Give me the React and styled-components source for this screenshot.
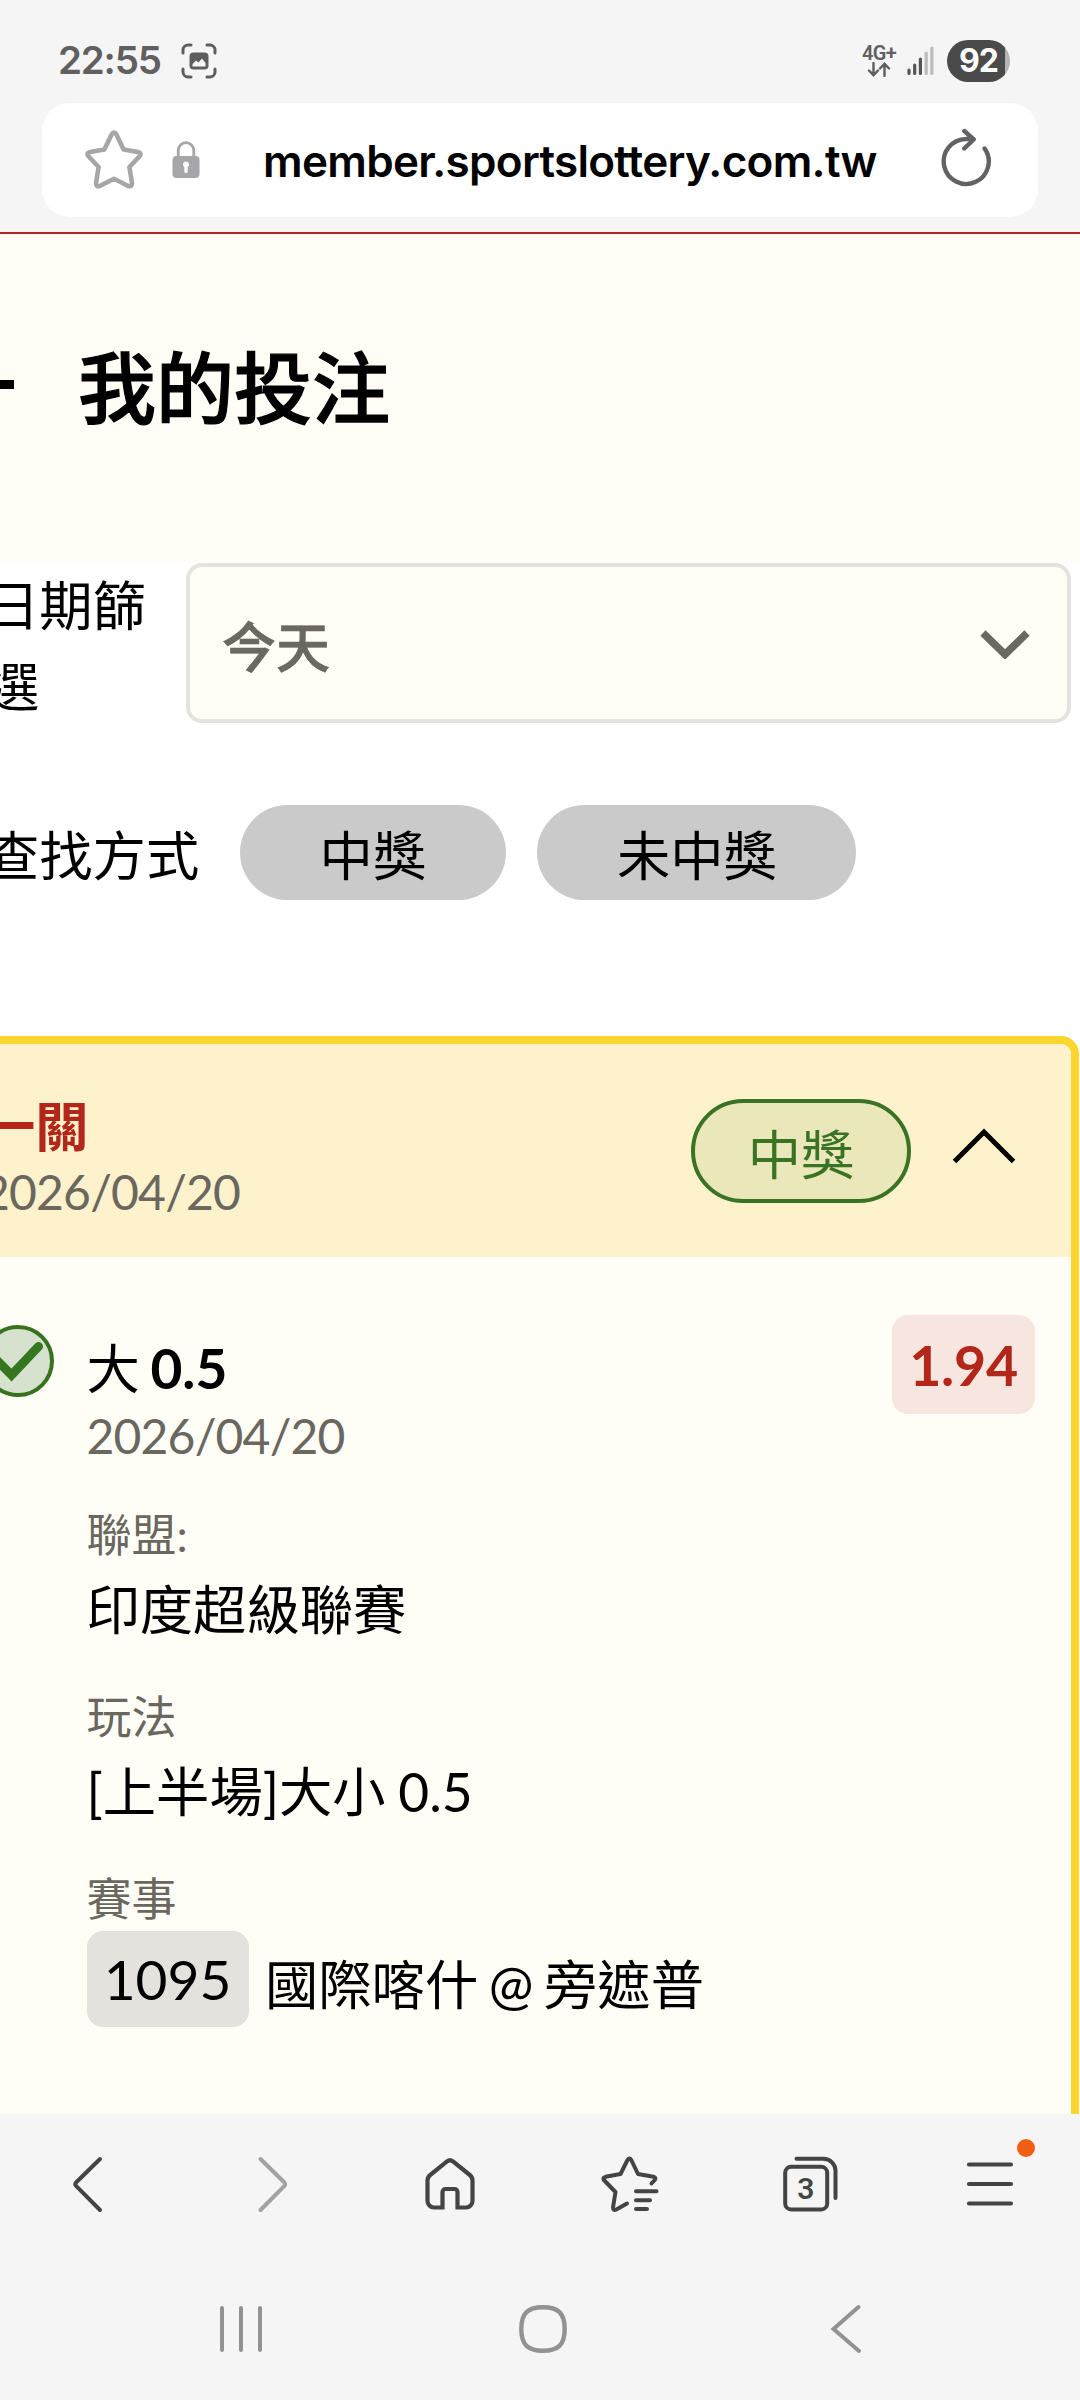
import React, { useState } from "react";
import styled, { createGlobalStyle } from "styled-components";

const GlobalStyle = createGlobalStyle`
  * {
    box-sizing: border-box;
  }
  body {
    margin: 0;
    background: #f5f5f5;
  }
  button {
    border: none;
    padding: 0;
    font-family: inherit;
    color: inherit;
  }
  svg {
    display: block;
    flex: none;
  }
`;

const chrome = "#444444";

const details = [
  { label: "聯盟:", value: "印度超級聯賽" },
  { label: "玩法", value: "[上半場]大小 0.5" },
];

const CaptureIcon = () => (
  <svg width="36" height="36" viewBox="0 0 36 36" fill="none">
    <path
      d="M2 10V7a5 5 0 0 1 5-5h3M26 2h3a5 5 0 0 1 5 5v3M34 26v3a5 5 0 0 1-5 5h-3M10 34H7a5 5 0 0 1-5-5v-3"
      stroke="#5e5e5e"
      strokeWidth="3"
      strokeLinecap="round"
    />
    <rect x="8.500" y="9.500" width="19" height="17" rx="4" fill="#5e5e5e" />
    <path
      d="M11.500 23.500v-2.500l3.500-3.500 2.500 2 3.500-4 3.500 4.500v3.500z"
      fill="#f5f5f5"
    />
  </svg>
);

const DataArrows = () => (
  <svg width="24" height="15" viewBox="0 0 24 15" fill="none">
    <path
      d="M6.500 1v12M2 8.500l4.500 4.700L11 8.500M17.500 14V2M13 6.500l4.500-4.700L22 6.500"
      stroke="#5e5e5e"
      strokeWidth="2.400"
      strokeLinecap="round"
    />
  </svg>
);

const SignalIcon = () => (
  <svg width="28" height="30" viewBox="0 0 28 30">
    <g stroke="#555" strokeWidth="3.200" strokeLinecap="round">
      <path d="M2 24v3.500M7.700 19v8.500M13.400 13v14.500" />
    </g>
    <g stroke="#bcbcbc" strokeWidth="3.200" strokeLinecap="round">
      <path d="M19.200 7v20.500M24.900 2v25.500" />
    </g>
  </svg>
);

const StarIcon = () => (
  <svg width="58" height="60" viewBox="0 0 58 60" fill="none">
    <path
      d="M26.600 4.500Q29 .8 31.400 4.500L38.600 19.500 53 22Q57.300 23.200 54.300 26.500L44.400 37 47 53Q47 57.300 43.200 56L29 48.800 14.800 56Q11 57.300 11 53L13.600 37 3.700 26.500Q.7 23.200 5 22L19.400 19.500Z"
      stroke="#a6a6a8"
      strokeWidth="4.600"
      strokeLinejoin="round"
    />
  </svg>
);

const LockIcon = () => (
  <svg width="28" height="38" viewBox="0 0 28 38">
    <path
      d="M6.200 17V9.500a7.800 7.800 0 0 1 15.600 0V17"
      fill="none"
      stroke="#a6a6a8"
      strokeWidth="2.800"
    />
    <rect x=".5" y="15" width="27" height="22" rx="4" fill="#a6a6a8" />
    <path
      d="M14 20.500a3 3 0 0 1 1.700 5.500v4.500a1.700 1.700 0 0 1-3.400 0V26a3 3 0 0 1 1.700-5.500z"
      fill="#fff"
    />
  </svg>
);

const ReloadIcon = () => (
  <svg width="54" height="60" viewBox="0 0 54 60" fill="none">
    <g
      stroke="#626264"
      strokeWidth="4.400"
      strokeLinecap="round"
      strokeLinejoin="round"
    >
      <path d="M45.600 20.500A22.500 22.500 0 1 1 27 11H34" />
      <path d="M25.300 3l9.400 8.500-9.400 9" />
    </g>
  </svg>
);

const SelectArrow = () => (
  <svg width="52" height="30" viewBox="0 0 52 30" fill="none">
    <path d="M4 4l22 21.500L48 4" stroke="#6a6861" strokeWidth="7.500" />
  </svg>
);

const CollapseArrow = () => (
  <svg width="64" height="38" viewBox="0 0 64 38" fill="none">
    <path d="M2.500 34.500L32 5l29.500 29.500" stroke="#000" strokeWidth="5" />
  </svg>
);

const CheckIcon = () => (
  <svg width="72" height="72" viewBox="0 0 72 72" fill="none">
    <circle
      cx="36"
      cy="36"
      r="34"
      fill="#d6e1ce"
      stroke="#37721f"
      strokeWidth="4"
    />
    <path
      d="M15.500 36L29.500 50 56.500 21.500"
      stroke="#35771f"
      strokeWidth="9"
      strokeLinecap="round"
    />
  </svg>
);

const BackIcon = ({ color = chrome }) => (
  <svg width="60" height="60" viewBox="0 0 60 60" fill="none">
    <path
      d="M40 5L16.300 28.200Q14.300 30.200 16.300 32.200L40 56"
      stroke={color}
      strokeWidth="4"
      strokeLinecap="round"
    />
  </svg>
);

const ForwardIcon = () => (
  <svg width="60" height="60" viewBox="0 0 60 60" fill="none">
    <path
      d="M20.500 5L44.200 28.200Q46.200 30.200 44.200 32.200L20.500 56"
      stroke="#a2a2a2"
      strokeWidth="4"
      strokeLinecap="round"
    />
  </svg>
);

const HomeIcon = () => (
  <svg width="60" height="60" viewBox="0 0 60 60" fill="none">
    <path
      d="M22.500 53.500H14a6.500 6.500 0 0 1-6.500-6.500V26.500a7 7 0 0 1 2.700-5.500L27 7.400a5 5 0 0 1 6 0L49.800 21a7 7 0 0 1 2.700 5.500V47a6.500 6.500 0 0 1-6.500 6.500H37.500V38a3 3 0 0 0-3-3h-9a3 3 0 0 0-3 3z"
      stroke={chrome}
      strokeWidth="4.200"
    />
  </svg>
);

const BookmarksIcon = () => (
  <svg width="60" height="60" viewBox="0 0 60 60" fill="none">
    <g
      stroke={chrome}
      strokeWidth="4"
      strokeLinecap="round"
      strokeLinejoin="round"
    >
      <path d="M51.500 29.500L54.800 26Q56.500 23.500 53.500 22.800L38 20 31.300 6Q29.400 3.200 27.500 6L20.500 20 5.500 22.800Q2 23.800 4.300 26.500L15.500 38 13 53.500Q13 57 16.300 55.500L27 49.500" />
      <path d="M36 37.300h20.500M36 46.300h14M36 55h11" />
    </g>
  </svg>
);

const TabsIcon = () => (
  <svg width="60" height="60" viewBox="0 0 60 60" fill="none">
    <g stroke={chrome} strokeWidth="4" strokeLinecap="round">
      <rect x="5.200" y="12.800" width="42" height="42.600" rx="6" />
      <path d="M16.500 4.800H43.500A12 12 0 0 1 55.500 16.800V44" />
    </g>
    <text
      x="25.800"
      y="44.500"
      textAnchor="middle"
      fill={chrome}
      fontFamily="Roboto, sans-serif"
      fontWeight="600"
      fontSize="30"
    >
      3
    </text>
  </svg>
);

const MenuIcon = () => (
  <svg width="60" height="60" viewBox="0 0 60 60" fill="none">
    <path
      d="M9 10.500h42M9 30h42M9 49.500h42"
      stroke={chrome}
      strokeWidth="4.200"
      strokeLinecap="round"
    />
  </svg>
);

const RecentsIcon = () => (
  <svg width="50" height="50" viewBox="0 0 50 50" fill="none">
    <path
      d="M6 4v42M25 4v42M44 4v42"
      stroke="#929292"
      strokeWidth="4"
      strokeLinecap="round"
    />
  </svg>
);

const NavHomeIcon = () => (
  <svg width="50" height="50" viewBox="0 0 50 50" fill="none">
    <path
      d="M25 3.300C40 3.300 46.700 9 46.700 25S40 46.700 25 46.700 3.300 41 3.300 25 10 3.300 25 3.300z"
      stroke="#929292"
      strokeWidth="4.400"
    />
  </svg>
);

const NavBackIcon = () => (
  <svg width="50" height="50" viewBox="0 0 50 50" fill="none">
    <path
      d="M38.500 3L13.500 25l25.500 22"
      stroke="#929292"
      strokeWidth="4"
      strokeLinecap="round"
    />
  </svg>
);

const App = () => {
  const [open, setOpen] = useState(true);

  return (
    <>
      <GlobalStyle />
      <Screen>
        <StatusBar>
          <Clock>22:55</Clock>
          <CaptureIcon />
          <StatusRight>
            <Network>
              <span>4G+</span>
              <DataArrows />
            </Network>
            <SignalIcon />
            <Battery>92</Battery>
          </StatusRight>
        </StatusBar>
        <AddressBar>
          <StarIcon />
          <LockIcon />
          <Url>member.sportslottery.com.tw</Url>
          <ReloadIcon />
        </AddressBar>
        <Page>
          <PageHead>
            <BackDash />
            <Title>我的投注</Title>
          </PageHead>
          <DateRow>
            <DateLabel>日期篩選</DateLabel>
            <Select>
              今天
              <SelectArrow />
            </Select>
          </DateRow>
          <SearchRow>
            <SearchLabel>查找方式</SearchLabel>
            <Pill>中獎</Pill>
            <Pill>未中獎</Pill>
          </SearchRow>
          <Card>
            <CardHead>
              <div>
                <CardTitle>一關</CardTitle>
                <DateText>2026/04/20</DateText>
              </div>
              <HeadRight>
                <WonBadge>中獎</WonBadge>
                <Toggle onClick={() => setOpen(!open)}>
                  <CollapseArrow />
                </Toggle>
              </HeadRight>
            </CardHead>
            {open && (
              <CardBody>
                <CheckIcon />
                <Details>
                  <Pick>
                    大 <b>0.5</b>
                  </Pick>
                  <DateText>2026/04/20</DateText>
                  {details.map((item) => (
                    <Detail key={item.label}>
                      <DetailLabel>{item.label}</DetailLabel>
                      <DetailValue>{item.value}</DetailValue>
                    </Detail>
                  ))}
                  <Detail>
                    <DetailLabel>賽事</DetailLabel>
                    <Match>
                      <MatchCode>1095</MatchCode>
                      <span>國際喀什 @ 旁遮普</span>
                    </Match>
                  </Detail>
                </Details>
                <Odds>1.94</Odds>
              </CardBody>
            )}
          </Card>
        </Page>
        <Toolbar>
          <ToolButton>
            <BackIcon />
          </ToolButton>
          <ToolButton>
            <ForwardIcon />
          </ToolButton>
          <ToolButton>
            <HomeIcon />
          </ToolButton>
          <ToolButton>
            <BookmarksIcon />
          </ToolButton>
          <ToolButton>
            <TabsIcon />
          </ToolButton>
          <ToolButton>
            <MenuIcon />
            <Dot />
          </ToolButton>
        </Toolbar>
        <NavBar>
          <RecentsIcon />
          <NavHomeIcon />
          <NavBackIcon />
        </NavBar>
      </Screen>
    </>
  );
};

const Screen = styled.div`
  width: 1080px;
  height: 2400px;
  overflow: hidden;
  display: flex;
  flex-direction: column;
  background: #f5f5f5;
  font-family: Lato, "Noto Sans CJK TC", sans-serif;
  color: #000;
`;

const StatusBar = styled.div`
  height: 103px;
  flex: none;
  display: flex;
  align-items: center;
  padding: 19px 70px 0 58px;
  font-family: Inter, sans-serif;
`;
const Clock = styled.span`
  width: 123px;
  padding-bottom: 2px;
  font-size: 38.5px;
  font-weight: 600;
  letter-spacing: -1.2px;
  color: #606060;
`;
const StatusRight = styled.div`
  margin-left: auto;
  display: flex;
  align-items: center;
`;
const Network = styled.div`
  display: flex;
  flex-direction: column;
  align-items: center;
  margin-right: 11px;
  span {
    font-family: Roboto, sans-serif;
    font-size: 20px;
    line-height: 17px;
    font-weight: 600;
    letter-spacing: -0.7px;
    color: #606060;
  }
`;
const Battery = styled.div`
  width: 63px;
  height: 42px;
  margin-left: 12px;
  border-radius: 21px;
  background: linear-gradient(to right, #4a4a4a 58px, #b4b4b4 58px);
  color: #fff;
  font-size: 32px;
  line-height: 42px;
  font-weight: 700;
  text-align: center;
  letter-spacing: -1px;
`;

const AddressBar = styled.div`
  height: 114px;
  flex: none;
  margin: 0 42px 9px;
  padding: 0 45px 0 43px;
  display: flex;
  align-items: center;
  border-radius: 28px;
  background: #fff;
  > svg:nth-child(2) {
    margin-left: 29px;
  }
  > svg:last-child {
    margin-left: auto;
    margin-bottom: 4px;
  }
`;
const Url = styled.span`
  margin-left: 63px;
  padding-top: 2px;
  font-family: Inter, sans-serif;
  font-size: 44px;
  font-weight: 600;
  letter-spacing: -0.7px;
  line-height: 60px;
  white-space: nowrap;
`;

const Page = styled.main`
  flex: none;
  height: 1888px;
  padding-top: 6px;
  overflow: hidden;
  background: linear-gradient(#faf5f0 6px, #fff 6px);
`;
const PageHead = styled.div`
  height: 330px;
  display: flex;
  align-items: center;
  border-top: 2px solid #b0282c;
  background: #fffdf5;
  padding-bottom: 28px;
`;
const BackDash = styled.div`
  width: 14px;
  height: 9px;
  background: #000;
`;
const Title = styled.h1`
  margin: 0 0 0 64px;
  font-family: "Noto Sans CJK TC", sans-serif;
  font-size: 78px;
  line-height: 100px;
  font-weight: 500;
  -webkit-text-stroke: 1.2px #000;
`;

const DateRow = styled.div`
  display: flex;
  height: 161px;
  margin-left: -14px;
  font-family: "Noto Sans CJK TC", sans-serif;
`;
const DateLabel = styled.div`
  width: 162px;
  font-size: 53.3px;
  line-height: 81px;
`;
const Select = styled.div`
  width: 885px;
  height: 160px;
  margin: 1px 0 0 38px;
  padding: 2px 36px 0 32px;
  display: flex;
  align-items: center;
  justify-content: space-between;
  border: 4px solid #e4e3dd;
  border-radius: 16px;
  background: #fffef6;
  font-size: 54px;
  font-weight: 500;
  -webkit-text-stroke: 0.7px #6a6861;
  color: #6a6861;
`;
const SearchRow = styled.div`
  display: flex;
  align-items: center;
  gap: 31.5px;
  margin: 82px 0 136px -14px;
  font-family: "Noto Sans CJK TC", sans-serif;
  font-size: 53.3px;
`;
const SearchLabel = styled.div`
  width: 222.5px;
`;
const Pill = styled.button`
  height: 95px;
  padding: 0 79.6px;
  border-radius: 48px;
  background: #cacaca;
  font-size: 53.3px;
  line-height: 96px;
`;

const Card = styled.section`
  width: 1139px;
  height: 1200px;
  margin-left: -60px;
  border: 8px solid #fcd52f;
  border-radius: 18px;
  background: #fffef6;
  overflow: hidden;
`;
const CardHead = styled.header`
  display: flex;
  justify-content: space-between;
  height: 213px;
  padding: 43px 55px 0 34px;
  background: #fef2cc;
`;
const CardTitle = styled.div`
  font-family: "Noto Sans CJK TC", sans-serif;
  font-size: 53.3px;
  line-height: 73px;
  font-weight: 700;
  color: #b3271a;
`;
const DateText = styled.div`
  font-size: 48px;
  line-height: 64px;
  letter-spacing: -0.8px;
  color: #6a675f;
`;
const HeadRight = styled.div`
  display: flex;
  align-items: flex-start;
  padding-top: 12px;
`;
const WonBadge = styled.div`
  width: 220px;
  height: 104px;
  border: 4px solid #3b7324;
  border-radius: 52px;
  background: #eae7ba;
  color: #3b7324;
  text-align: center;
  font-family: "Noto Sans CJK TC", sans-serif;
  font-size: 53.3px;
  line-height: 97px;
`;
const Toggle = styled.button`
  margin: 28px 0 0 41px;
  background: none;
`;

const CardBody = styled.div`
  display: flex;
  align-items: flex-start;
  padding: 58px 36px 0 34px;
  > svg {
    margin-top: 10px;
  }
`;
const Details = styled.div`
  flex: 1;
  margin-left: 32.5px;
  padding-top: 17px;
`;
const Pick = styled.div`
  font-size: 53.3px;
  line-height: 72px;
  word-spacing: -3px;
  b {
    font-size: 55px;
    line-height: 1;
  }
`;
const Detail = styled.div`
  margin-top: 34px;
  &:nth-child(3) {
    margin-top: 35px;
  }
`;
const DetailLabel = styled.div`
  font-size: 45px;
  line-height: 64px;
  color: #6a675f;
`;
const DetailValue = styled.div`
  font-size: 53.3px;
  line-height: 84px;
  word-spacing: -1px;
`;
const Match = styled.div`
  display: flex;
  align-items: center;
  gap: 16.5px;
  height: 96px;
  font-size: 53.3px;
  word-spacing: -3px;
  white-space: nowrap;
  span:last-child {
    padding-top: 4px;
  }
`;
const MatchCode = styled.span`
  width: 162px;
  height: 96px;
  border-radius: 16px;
  background: #e4e2dc;
  text-align: center;
  font-size: 55px;
  line-height: 96px;
`;
const Odds = styled.div`
  width: 143px;
  height: 99px;
  border-radius: 16px;
  background: #f7e6df;
  color: #b3271a;
  text-align: center;
  font-size: 55.5px;
  line-height: 99px;
  font-weight: 700;
  letter-spacing: -0.3px;
`;

const Toolbar = styled.nav`
  display: grid;
  grid-template-columns: repeat(6, 180px);
  height: 140px;
  flex: none;
`;
const ToolButton = styled.button`
  position: relative;
  display: flex;
  align-items: center;
  justify-content: center;
  background: none;
`;
const Dot = styled.span`
  position: absolute;
  top: 25px;
  right: 45px;
  width: 18px;
  height: 18px;
  border-radius: 50%;
  background: #f05f14;
`;
const NavBar = styled.nav`
  flex: 1;
  display: grid;
  grid-template-columns: repeat(3, 302px);
  place-items: center;
  padding: 4px 84px 0 90px;
`;

export default App;
